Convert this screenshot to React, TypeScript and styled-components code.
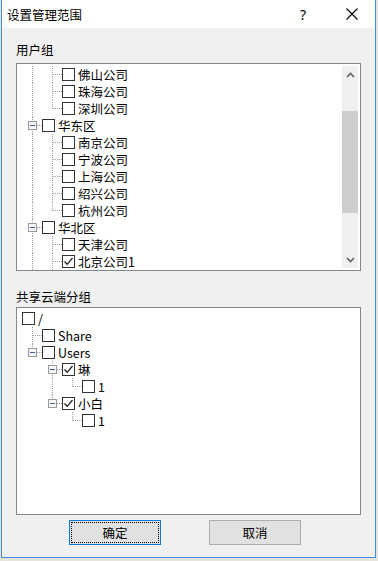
import React from 'react';
import styled, { createGlobalStyle } from 'styled-components';

type TreeNode = { label: string; checked?: boolean; children?: TreeNode[] };

type FlatRow = {
  node: TreeNode;
  guides: boolean[];
  connector: boolean;
  last: boolean;
};

const userGroups: TreeNode[] = [
  {
    label: '华南区',
    children: [
      { label: '广州公司' },
      { label: '佛山公司' },
      { label: '珠海公司' },
      { label: '深圳公司' }
    ]
  },
  {
    label: '华东区',
    children: [
      { label: '南京公司' },
      { label: '宁波公司' },
      { label: '上海公司' },
      { label: '绍兴公司' },
      { label: '杭州公司' }
    ]
  },
  {
    label: '华北区',
    children: [
      { label: '天津公司' },
      { label: '北京公司1', checked: true },
      { label: '石家庄公司' }
    ]
  },
  { label: '华中区', children: [{ label: '武汉公司' }] }
];

const cloudGroups: TreeNode[] = [
  {
    label: '/',
    children: [
      { label: 'Share' },
      {
        label: 'Users',
        children: [
          { label: '琳', checked: true, children: [{ label: '1' }] },
          { label: '小白', checked: true, children: [{ label: '1' }] }
        ]
      }
    ]
  }
];

// flattens the tree into rows, keeping which ancestor lines pass by each row
const flatten = (
  nodes: TreeNode[],
  guides: boolean[],
  linesAtRoot: boolean,
  depth = 0
): FlatRow[] =>
  nodes.flatMap((node, i) => {
    const last = i === nodes.length - 1;
    const connector = linesAtRoot || depth > 0;
    const row: FlatRow = { node, guides, connector, last };
    const childGuides = connector ? [...guides, !last] : guides;
    return [
      row,
      ...(node.children ? flatten(node.children, childGuides, linesAtRoot, depth + 1) : [])
    ];
  });

const GlobalStyle = createGlobalStyle`
  html, body {
    margin: 0;
    padding: 0;
    background: #e7e3da;
  }
  body {
    font-family: "Noto Sans CJK SC", "Noto Sans", sans-serif;
  }
`;

const Dialog = styled.div`
  box-sizing: border-box;
  width: 375px;
  height: 558px;
  margin-left: 1px;
  border: 1px solid #3e8de0;
  border-top: none;
  background: #f0f0f0;
  display: flex;
  flex-direction: column;
`;

const TitleBar = styled.div`
  height: 28px;
  background: #fff;
  display: flex;
  align-items: center;
  padding-left: 5px;
`;

const Title = styled.div`
  flex: 1;
  font-size: 12.5px;
  color: #000;
`;

const TitleButton = styled.div<{ $gap?: number }>`
  width: 46px;
  height: 28px;
  margin-left: ${p => p.$gap ?? 0}px;
  display: flex;
  align-items: center;
  justify-content: center;
  font-family: "Noto Sans", sans-serif;
  font-size: 14px;
  color: #000;
`;

const Body = styled.div`
  flex: 1;
  display: flex;
  flex-direction: column;
  padding: 13px 14px 0 14px;
`;

const GroupLabel = styled.div<{ $top: number; $bottom: number }>`
  font-size: 12.5px;
  line-height: 17px;
  color: #000;
  margin-top: ${p => p.$top}px;
  margin-bottom: ${p => p.$bottom}px;
`;

const TreeBox = styled.div`
  box-sizing: border-box;
  height: 208px;
  border: 1px solid #828790;
  background: #fff;
  display: flex;
`;

const TreePane = styled.div<{ $clip?: boolean }>`
  flex: 1;
  overflow: ${p => (p.$clip ? 'hidden' : 'visible')};
  padding: 2px 0 0 5px;
`;

const Row = styled.div`
  height: 17px;
  display: flex;
  align-items: center;
`;

const Cell = styled.div`
  width: 20px;
  height: 17px;
  flex: none;
  svg {
    display: block;
  }
`;

const Box = styled.div`
  width: 13px;
  height: 13px;
  flex: none;
  svg {
    display: block;
  }
`;

const NodeLabel = styled.span`
  margin-left: 3px;
  font-size: 12.5px;
  line-height: 17px;
  color: #000;
  white-space: nowrap;
`;

const ScrollBar = styled.div`
  width: 16px;
  margin: 2px 2px 2px 0;
  background: #f0f0f0;
  display: flex;
  flex-direction: column;
`;

const ScrollArrow = styled.div`
  height: 17px;
  display: flex;
  align-items: center;
  justify-content: center;
`;

const Thumb = styled.div`
  margin-top: 28px;
  height: 102px;
  background: #cdcdcd;
`;

const TrackRest = styled.div`
  flex: 1;
`;

const ButtonRow = styled.div`
  display: flex;
  gap: 48px;
  margin-top: 5px;
  padding-left: 53px;
`;

const Button = styled.div<{ $focused?: boolean }>`
  box-sizing: border-box;
  width: 92px;
  height: 25px;
  background: #e1e1e1;
  border: 1px solid ${p => (p.$focused ? '#0078d7' : '#adadad')};
  display: flex;
  align-items: center;
  justify-content: center;
  font-size: 12.5px;
  color: #000;
  outline: ${p => (p.$focused ? '1px dotted #000' : 'none')};
  outline-offset: -3px;
`;

const dotted = { stroke: '#a0a0a0', strokeDasharray: '1 1', shapeRendering: 'crispEdges' as const };

const Guide = ({ line }: { line: boolean }) => (
  <Cell>
    {line && (
      <svg width="20" height="17">
        <line x1="10.5" y1="0" x2="10.5" y2="17" {...dotted} />
      </svg>
    )}
  </Cell>
);

const Connector = ({ last, expander }: { last: boolean; expander: boolean }) => (
  <Cell>
    <svg width="20" height="17">
      <line x1="10.5" y1="0" x2="10.5" y2={last ? 9 : 17} {...dotted} />
      <line x1="11" y1="8.5" x2="20" y2="8.5" {...dotted} />
      {expander && (
        <g shapeRendering="crispEdges">
          <rect x="6.5" y="4.5" width="8" height="8" fill="#f7f7f7" stroke="#9a9a9a" />
          <line x1="8" y1="8.5" x2="13" y2="8.5" stroke="#3c5fa3" />
        </g>
      )}
    </svg>
  </Cell>
);

const CheckBox = ({ checked }: { checked?: boolean }) => (
  <Box>
    <svg width="13" height="13">
      <rect x="0.5" y="0.5" width="12" height="12" fill="#fff" stroke="#333" shapeRendering="crispEdges" />
      {checked && (
        <polyline points="2.5,6.5 5.2,9.3 10.5,3" fill="none" stroke="#222" strokeWidth="1.3" />
      )}
    </svg>
  </Box>
);

const TreeRows = ({ rows }: { rows: FlatRow[] }) => (
  <>
    {rows.map((r, i) => (
      <Row key={i}>
        {r.guides.map((g, j) => (
          <Guide key={j} line={g} />
        ))}
        {r.connector && <Connector last={r.last} expander={!!r.node.children} />}
        <CheckBox checked={r.node.checked} />
        <NodeLabel>{r.node.label}</NodeLabel>
      </Row>
    ))}
  </>
);

const Chevron = ({ up }: { up?: boolean }) => (
  <svg width="9" height="6">
    <polyline
      points={up ? '1,5 4.5,1.5 8,5' : '1,1 4.5,4.5 8,1'}
      fill="none"
      stroke="#606060"
      strokeWidth="1.6"
    />
  </svg>
);

export default function App() {
  const userRows = flatten(userGroups, [], true);
  const firstVisible = userRows.findIndex(r => r.node.label === '佛山公司');
  const cloudRows = flatten(cloudGroups, [], false);

  return (
    <>
      <GlobalStyle />
      <Dialog>
        <TitleBar>
          <Title>设置管理范围</Title>
          <TitleButton>?</TitleButton>
          <TitleButton $gap={3}>
            <svg width="12" height="12">
              <path d="M0.5 0.5 L11.5 11.5 M11.5 0.5 L0.5 11.5" stroke="#000" strokeWidth="1.1" />
            </svg>
          </TitleButton>
        </TitleBar>
        <Body>
          <GroupLabel $top={0} $bottom={5}>用户组</GroupLabel>
          <TreeBox>
            <TreePane $clip>
              <TreeRows rows={userRows.slice(firstVisible)} />
            </TreePane>
            <ScrollBar>
              <ScrollArrow>
                <Chevron up />
              </ScrollArrow>
              <Thumb />
              <TrackRest />
              <ScrollArrow>
                <Chevron />
              </ScrollArrow>
            </ScrollBar>
          </TreeBox>
          <GroupLabel $top={17} $bottom={2}>共享云端分组</GroupLabel>
          <TreeBox>
            <TreePane>
              <TreeRows rows={cloudRows} />
            </TreePane>
          </TreeBox>
          <ButtonRow>
            <Button $focused>确定</Button>
            <Button>取消</Button>
          </ButtonRow>
        </Body>
      </Dialog>
    </>
  );
}
